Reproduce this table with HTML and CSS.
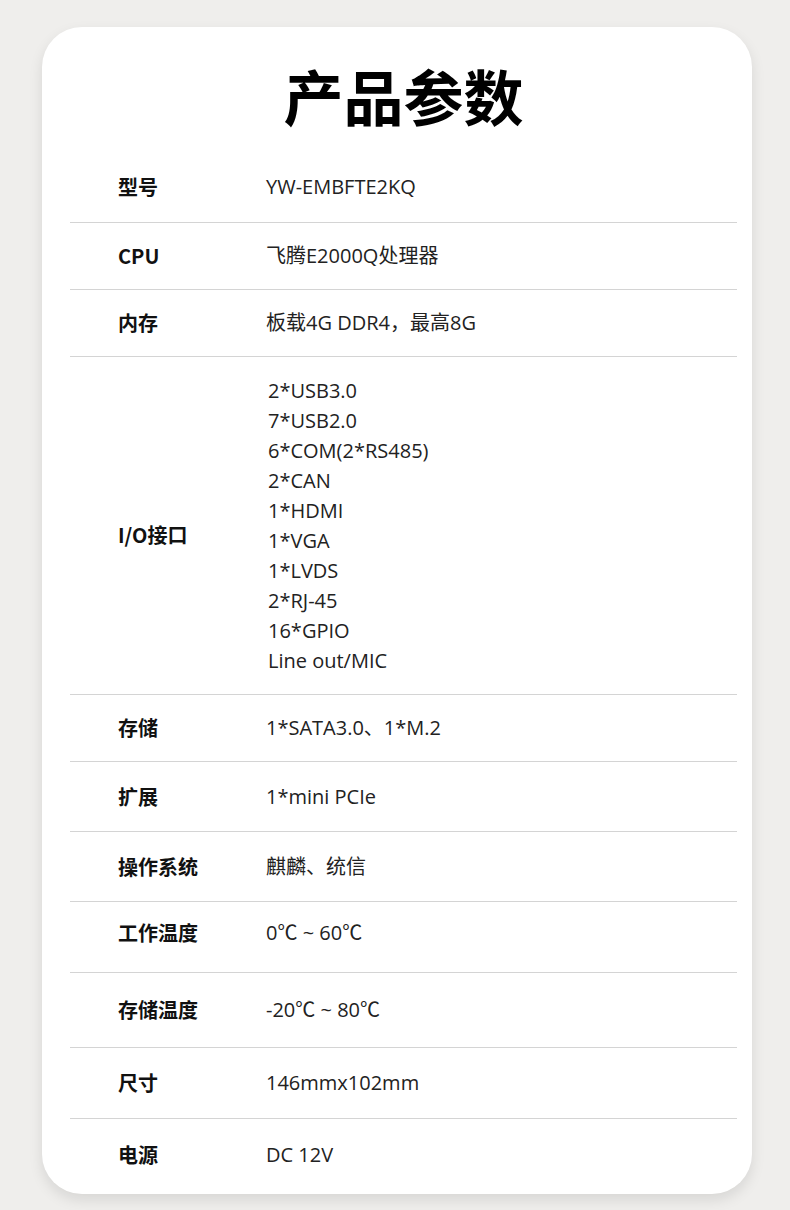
FILE: index.html
```html
<!DOCTYPE html>
<html lang="zh-CN">
<head>
<meta charset="utf-8">
<title>产品参数</title>
<link rel="stylesheet" href="styles.css">
</head>
<body>
<main class="card">
  <section class="specs">
    <h1 class="title">产品参数</h1>
    <div class="row row--first"><div class="label">型号</div><div class="value">YW-EMBFTE2KQ</div></div>
    <div class="row"><div class="label">CPU</div><div class="value">飞腾E2000Q处理器</div></div>
    <div class="row"><div class="label">内存</div><div class="value">板载4G DDR4，最高8G</div></div>
    <div class="row row--list">
      <div class="label label--low">I/O接口</div>
      <ul class="value list">
        <li>2*USB3.0</li>
        <li>7*USB2.0</li>
        <li>6*COM(2*RS485)</li>
        <li>2*CAN</li>
        <li>1*HDMI</li>
        <li>1*VGA</li>
        <li>1*LVDS</li>
        <li>2*RJ-45</li>
        <li>16*GPIO</li>
        <li>Line out/MIC</li>
      </ul>
    </div>
    <div class="row"><div class="label">存储</div><div class="value">1*SATA3.0、1*M.2</div></div>
    <div class="row row--h70"><div class="label">扩展</div><div class="value">1*mini PCIe</div></div>
    <div class="row row--h70"><div class="label">操作系统</div><div class="value">麒麟、统信</div></div>
    <div class="row row--h71 row--raise"><div class="label">工作温度</div><div class="value">0℃ ~ 60℃</div></div>
    <div class="row row--h75"><div class="label">存储温度</div><div class="value">-20℃ ~ 80℃</div></div>
    <div class="row row--h71"><div class="label">尺寸</div><div class="value">146mmx102mm</div></div>
    <div class="row row--last"><div class="label">电源</div><div class="value">DC 12V</div></div>
  </section>
</main>
</body>
</html>
```

FILE: styles.css
```css
* { box-sizing: border-box; }
html, body { margin: 0; padding: 0; }
body {
  background: #efeeec;
  font-family: "Open Sans", "Noto Sans CJK SC", sans-serif;
  color: #1a1a1a;
  width: 790px;
  height: 1210px;
  overflow: hidden;
}
.card {
  margin: 27px 0 0 42px;
  width: 710px;
  height: 1167px;
  background: #ffffff;
  border-radius: 40px;
  box-shadow: 0 6px 14px rgba(0, 0, 0, 0.10);
  padding: 0 15px 0 28px;
}
.specs {
  display: flex;
  flex-direction: column;
}
.title {
  margin: 0;
  padding-top: 32px;
  height: 124px;
  font-family: "Noto Sans CJK SC", sans-serif;
  font-size: 60px;
  line-height: 72px;
  font-weight: 700;
  text-align: center;
  color: #000;
}
.row {
  display: flex;
  align-items: center;
  height: 67px;
  border-bottom: 1px solid #d4d4d4;
}
.row--first { height: 72px; }
.row--h70 { height: 70px; }
.row--h71 { height: 71px; }
.row--h75 { height: 75px; }
.row--raise { padding-bottom: 8px; }
.row--list { height: 338px; }
.row--last { border-bottom: none; height: 72px; }
.label {
  width: 196px;
  padding-left: 48px;
  flex: none;
  font-family: "Noto Sans CJK SC", sans-serif;
  font-size: 20px;
  font-weight: 700;
  color: #111;
  line-height: 26px;
}
.label--low { padding-top: 18px; }
.value {
  font-size: 20px;
  color: #222;
  line-height: 26px;
}
.list {
  list-style: none;
  margin: 0;
  padding: 0 0 0 2px;
}
.list li {
  line-height: 30px;
}
```
